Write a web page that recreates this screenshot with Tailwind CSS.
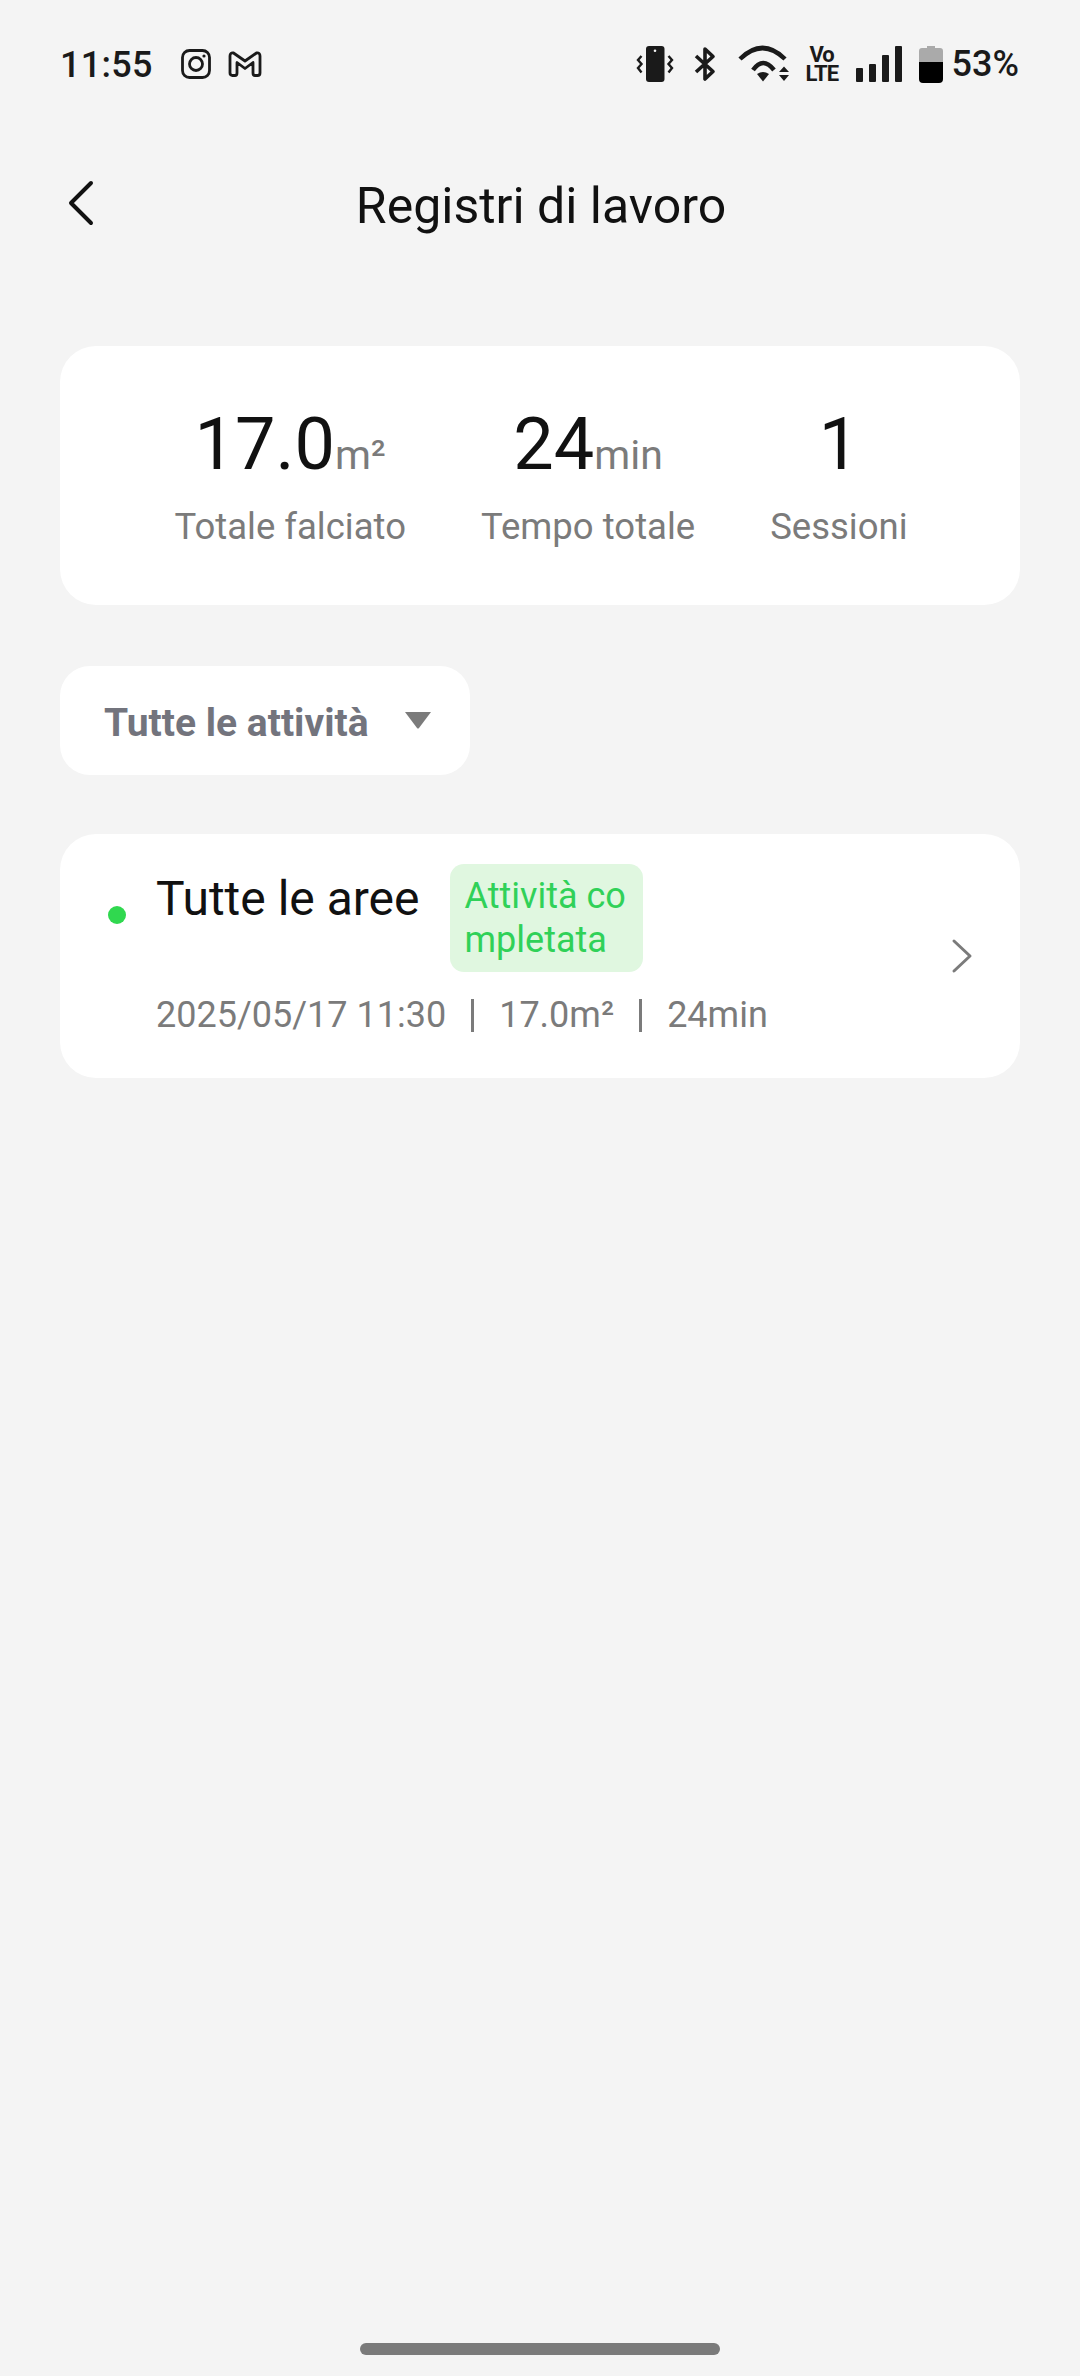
<!DOCTYPE html>
<html lang="it">

<head>
    <meta charset="UTF-8">
    <meta name="viewport" content="width=device-width, initial-scale=1.0">
    <script src="https://cdn.jsdelivr.net/npm/@tailwindcss/browser@4"></script>
    <title>Registri di lavoro</title>
</head>

<body class="relative w-[1080px] h-[2376px] overflow-hidden bg-[#f4f4f4] font-['Roboto',sans-serif]">
    <!-- status bar -->
    <div class="flex items-center justify-between h-[64px] mt-[32px] pl-[60px] pr-[61px] text-[#1a1a1a]">
        <div class="flex items-center">
            <span class="mt-[1px] text-[36px] font-medium leading-none tracking-[0.3px]">11:55</span>
            <svg class="ml-[28px]" width="30" height="30" viewBox="0 0 30 30" fill="none" stroke="#1a1a1a" stroke-width="2.8">
                <rect x="1.5" y="1.5" width="27" height="27" rx="7" />
                <circle cx="15" cy="15" r="6.5" />
                <circle cx="23" cy="7" r="1.6" fill="#1a1a1a" stroke="none" />
            </svg>
            <svg class="ml-[17px]" width="34" height="26" viewBox="0 0 34 26" fill="none" stroke="#1a1a1a" stroke-width="2.8" stroke-linejoin="round">
                <path d="M2 5 Q2 1.5 5.5 2 L17 10 L28.5 2 Q32 1.5 32 5 V22 Q32 24.5 29.5 24.5 H27 Q25 24.5 25 22 V11.5 L17 17.5 L9 11.5 V22 Q9 24.5 7 24.5 H4.5 Q2 24.5 2 22 Z" />
            </svg>
        </div>
        <div class="flex items-center">
            <svg width="38" height="38" viewBox="0 0 38 38" fill="none">
                <rect x="10" y="1" width="18.5" height="36" rx="3" fill="#1a1a1a" />
                <circle cx="19" cy="5.7" r="1.3" fill="#f4f4f4" />
                <path d="M5.5 11 L2 15 L5.5 19 L2 23 L5.5 27.5 M32.5 11 L36 15 L32.5 19 L36 23 L32.5 27.5" stroke="#1a1a1a" stroke-width="2.4" />
            </svg>
            <svg class="ml-[20px]" width="22" height="38" viewBox="0 0 22 38" fill="none" stroke="#1a1a1a" stroke-width="3.6" stroke-linejoin="round">
                <path d="M2 11 L19 26.5 L11 34 V4 L19 11.5 L2 27" />
            </svg>
            <svg class="ml-[21px]" width="52" height="38" viewBox="0 0 52 38" fill="none" stroke="#1a1a1a" stroke-width="4.5">
                <path d="M3 14 Q25.5 -8 48 14" />
                <path d="M16 25 Q26 11 37 25" />
                <path d="M20 29 L26 36.5 L32 29 Q26 25 20 29 Z" fill="#1a1a1a" stroke="none" />
                <path d="M42 27 L47 21.5 L52 27 Z M42 30 L52 30 L47 36 Z" fill="#1a1a1a" stroke="none" />
            </svg>
            <div class="ml-[17px] w-[32px] text-center text-[22px] leading-[19px] tracking-[-1px] font-bold text-[#1a1a1a]">Vo<br>LTE</div>
            <div class="ml-[18px] flex items-end gap-[6px] h-[36px]">
                <span class="w-[7px] h-[14px] rounded-[1px] bg-[#1a1a1a]"></span>
                <span class="w-[7px] h-[18px] rounded-[1px] bg-[#1a1a1a]"></span>
                <span class="w-[7px] h-[27px] rounded-[1px] bg-[#1a1a1a]"></span>
                <span class="w-[7px] h-[36px] rounded-[1px] bg-[#1a1a1a]"></span>
            </div>
            <svg class="ml-[17px]" width="24" height="38" viewBox="0 0 24 38">
                <path d="M0 6 Q0 3 3 3 H8 V1 H16 V3 H21 Q24 3 24 6 V17 H0 Z" fill="#aaaaaa" />
                <path d="M0 17 H24 V34 Q24 38 20 38 H4 Q0 38 0 34 Z" fill="#000" />
            </svg>
            <span class="ml-[9px] text-[36px] font-medium leading-none">53%</span>
        </div>
    </div>

    <!-- header -->
    <header class="relative flex items-center justify-center h-[64px] mt-[77px]">
        <svg class="absolute left-[66px] top-[7px]" width="30" height="46" viewBox="0 0 30 46" fill="none" stroke="#111" stroke-width="4" stroke-linecap="round" stroke-linejoin="round">
            <path d="M25 3 L5 23 L25 43" />
        </svg>
        <h1 class="ml-[2px] mt-[2px] text-[50px] leading-none text-[#111]">Registri di lavoro</h1>
    </header>

    <main class="flex flex-col mx-[60px] mt-[109px]">
        <!-- totals -->
        <section class="flex justify-center gap-[75px] h-[259px] pt-[62px] pl-[2px] bg-white rounded-[36px]">
            <div class="flex flex-col items-center">
                <div class="flex items-baseline h-[74px] leading-[74px] text-[72px] text-[#111]">17.0<span class="text-[41px] text-[#7b7b7b]">m²</span></div>
                <span class="mt-[23px] text-[36.5px] leading-[44px] text-[#7b7b7b]">Totale falciato</span>
            </div>
            <div class="flex flex-col items-center">
                <div class="flex items-baseline h-[74px] leading-[74px] text-[72px] text-[#111]">24<span class="text-[41px] text-[#7b7b7b]">min</span></div>
                <span class="mt-[23px] text-[36.5px] leading-[44px] text-[#7b7b7b]">Tempo totale</span>
            </div>
            <div class="flex flex-col items-center">
                <div class="h-[74px] leading-[74px] text-[72px] text-[#111]">1</div>
                <span class="mt-[23px] text-[36.5px] leading-[44px] text-[#7b7b7b]">Sessioni</span>
            </div>
        </section>

        <!-- filter -->
        <button class="flex items-center w-[410px] h-[109px] mt-[61px] pl-[44px] bg-white rounded-[30px]">
            <span class="mt-[6px] text-[39px] font-bold text-[#73747d]">Tutte le attività</span>
            <svg class="ml-[35px] mb-[2px]" width="28" height="18" viewBox="0 0 28 18">
                <path d="M1 1 H27 L15 17 Q14 18 13 17 Z" fill="#7b7b7b" />
            </svg>
        </button>

        <!-- work log row -->
        <article class="flex items-center h-[244px] mt-[59px] pl-[48px] pr-[46px] bg-white rounded-[36px]">
            <span class="self-start w-[18px] h-[18px] mt-[72px] rounded-full bg-[#30d84f]"></span>
            <div class="flex flex-col ml-[30px] self-start mt-[30px]">
                <div class="flex items-start">
                    <span class="mt-[7px] text-[48px] leading-[56px] text-[#111]">Tutte le aree</span>
                    <span class="w-[193px] ml-[30px] px-[15px] py-[10px] bg-[#e0f7e0] rounded-[14px] text-[36px] leading-[44px] text-[#30d158] break-all">Attività co mpletata</span>
                </div>
                <div class="flex items-center mt-[21px] text-[36px] leading-[44px] text-[#7b7b7b]">
                    <span>2025/05/17 11:30</span>
                    <span class="w-[3px] h-[33px] mx-[25px] bg-[#7b7b7b]"></span>
                    <span>17.0m²</span>
                    <span class="w-[3px] h-[33px] mx-[25px] bg-[#7b7b7b]"></span>
                    <span>24min</span>
                </div>
            </div>
            <svg class="ml-auto" width="24" height="36" viewBox="0 0 24 36" fill="none" stroke="#7b7b7b" stroke-width="3" stroke-linecap="round" stroke-linejoin="round">
                <path d="M4 3 L20 18 L4 33" />
            </svg>
        </article>
    </main>

    <div class="absolute left-[360px] top-[2343px] w-[360px] h-[12px] rounded-full bg-[#7a7a7a]"></div>
</body>

</html>
